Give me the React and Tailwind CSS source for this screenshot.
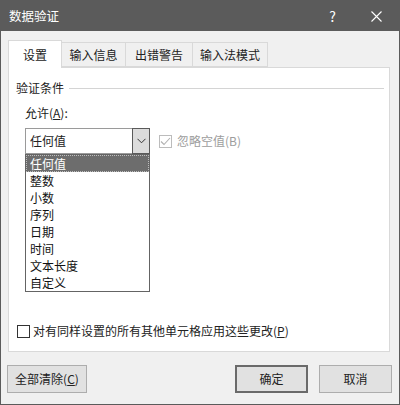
import React from "react";

const FONT = { fontFamily: '"Noto Sans CJK SC", "Microsoft YaHei", sans-serif' };

const ITEMS = ["任何值", "整数", "小数", "序列", "日期", "时间", "文本长度", "自定义"];

function Tab({ label, active, width }) {
  if (active) {
    return (
      <div
        className={`${width} h-[28px] -mb-px bg-white border border-b-0 border-[#d9d9d9] flex items-center justify-center text-[12px] text-[#222] relative z-10`}
      >
        {label}
      </div>
    );
  }
  return (
    <div
      className={`${width} h-[25px] -ml-px bg-[#f0f0f0] border border-[#d9d9d9] flex items-center justify-center text-[12px] text-[#222]`}
    >
      {label}
    </div>
  );
}

function Chevron() {
  return (
    <svg width="9" height="6" viewBox="0 0 9 6">
      <path d="M0.5 0.8 L4.5 4.8 L8.5 0.8" fill="none" stroke="#333" strokeWidth="1" />
    </svg>
  );
}

export default function App() {
  return (
    <div
      className="w-[400px] h-[405px] border border-[#5b5b5b] bg-[#f0f0f0] flex flex-col select-none"
      style={FONT}
    >
      {/* Title bar */}
      <div className="h-[30px] bg-[#5b5b5b] flex items-center text-white shrink-0">
        <span className="pl-[8px] text-[12.5px]">数据验证</span>
        <span className="ml-auto mr-[35px] text-[14px]">?</span>
        <svg className="mr-[17px]" width="11" height="11" viewBox="0 0 11 11">
          <path d="M0.5 0.5 L10.5 10.5 M10.5 0.5 L0.5 10.5" stroke="#fff" strokeWidth="1.1" />
        </svg>
      </div>

      {/* Tabs + panel */}
      <div className="pl-[7px] pr-[9px] pt-[9px]">
        <div className="flex items-end">
          <Tab label="设置" active width="w-[54px]" />
          <Tab label="输入信息" width="w-[65px]" />
          <Tab label="出错警告" width="w-[68px]" />
          <Tab label="输入法模式" width="w-[76px]" />
        </div>

        <div className="h-[285px] bg-white border border-[#d9d9d9] flex flex-col text-[12px] text-[#222]">
          <div className="flex items-center mt-[11px] pl-[7px] pr-[5px] h-[18px]">
            <span>验证条件</span>
            <div className="flex-1 h-px bg-[#d4d4d4] ml-[5px]" />
          </div>

          <div className="pl-[16px] mt-[7px] h-[18px] leading-[18px]">
            允许(<span className="underline">A</span>):
          </div>

          <div className="pl-[16px] mt-[6px] flex items-center">
            <div className="relative">
              <div className="w-[125px] h-[26px] border border-[#9a9a9a] bg-white flex items-center">
                <span className="pl-[4px] flex-1">任何值</span>
                <div className="w-[18px] h-[26px] -mr-px -my-px border border-[#5a5a5a] bg-[#dcdcdc] flex items-center justify-center">
                  <Chevron />
                </div>
              </div>

              {/* Open dropdown list */}
              <div className="absolute left-0 top-[26px] w-[125px] border border-[#646464] bg-white z-20">
                {ITEMS.map((it, i) => (
                  <div
                    key={it}
                    className={
                      i === 0
                        ? "h-[17px] leading-[15px] pl-[3px] bg-[#6d6d6d] text-white border border-dotted border-[#bdbdbd]"
                        : "h-[17px] leading-[17px] pl-[4px] text-[#111]"
                    }
                  >
                    {it}
                  </div>
                ))}
              </div>
            </div>

            <div className="ml-[9px] flex items-center text-[#9d9d9d]">
              <div className="w-[13px] h-[13px] border border-[#bcbcbc] flex items-center justify-center">
                <svg width="11" height="9" viewBox="0 0 11 9">
                  <path d="M1 4.5 L4 7.5 L10 1" fill="none" stroke="#b0b0b0" strokeWidth="1.1" />
                </svg>
              </div>
              <span className="ml-[5px]">忽略空值(B)</span>
            </div>
          </div>

          <div className="flex-1" />

          <div className="flex items-center pl-[8px] pb-[11px] h-[18px] box-content">
            <div className="w-[13px] h-[13px] border border-[#333] bg-white" />
            <span className="ml-[3px]">
              对有同样设置的所有其他单元格应用这些更改(<span className="underline">P</span>)
            </span>
          </div>
        </div>
      </div>

      {/* Bottom buttons */}
      <div className="flex items-center pl-[6px] pr-[7px] mt-[13px] text-[12px] text-[#222]">
        <button className="w-[80px] h-[28px] bg-[#e1e1e1] border border-[#adadad] flex items-center justify-center">
          全部清除(<span className="underline">C</span>)
        </button>
        <button className="ml-auto w-[73px] h-[28px] bg-[#e1e1e1] border-2 border-[#6a6a6a] flex items-center justify-center">
          确定
        </button>
        <button className="ml-[11px] w-[73px] h-[28px] bg-[#e1e1e1] border border-[#adadad] flex items-center justify-center">
          取消
        </button>
      </div>
    </div>
  );
}
